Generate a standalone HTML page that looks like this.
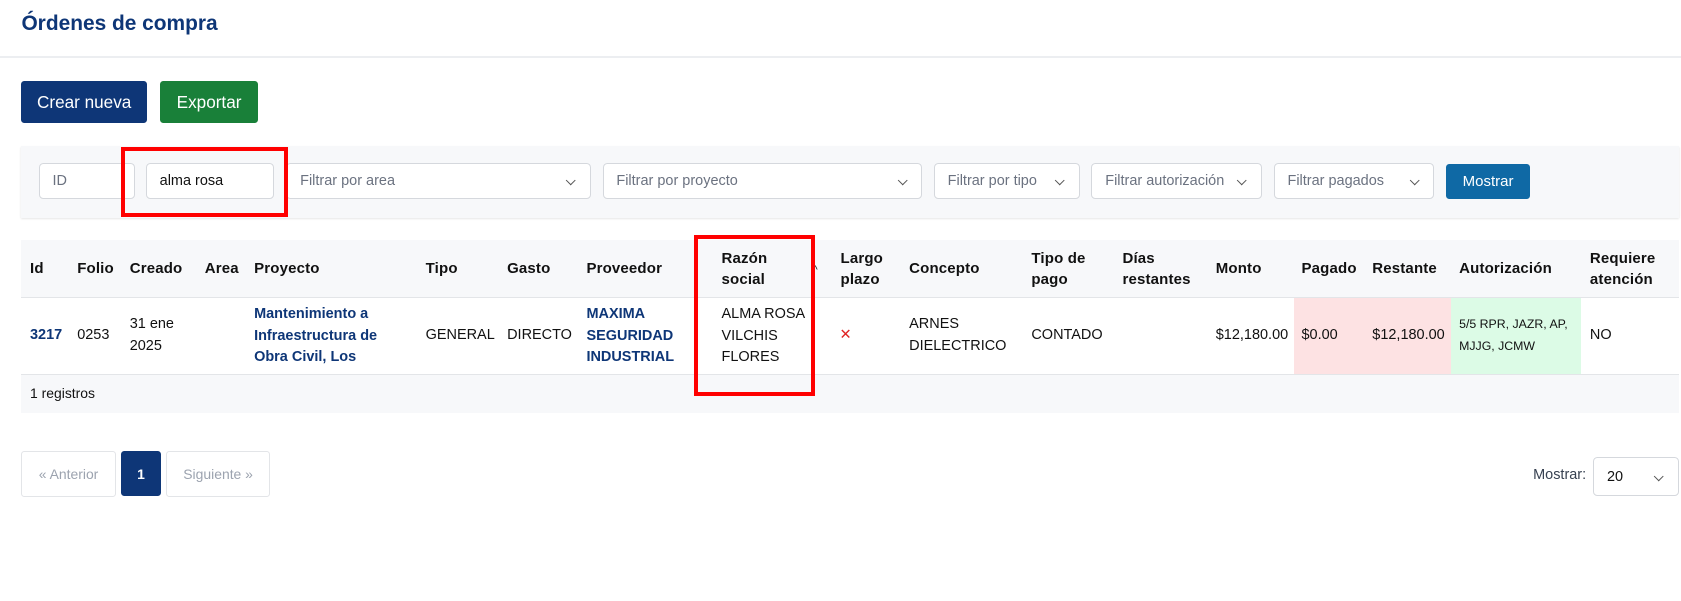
<!DOCTYPE html>
<html><head><meta charset="utf-8"><style>
html,body{margin:0;padding:0;background:#fff;overflow:hidden}
body{width:1568px;height:561px;zoom:1.0721;position:relative;font-family:"Liberation Sans",Arial,sans-serif;color:#111;font-size:14px}
.a{position:absolute}
.btn{position:absolute;color:#fff;border-radius:3px;display:flex;align-items:center;justify-content:center}
.inp{position:absolute;top:152px;height:34px;box-sizing:border-box;border:1px solid #d5d8dd;border-radius:4px;background:#fff;display:flex;align-items:center;padding-left:12px;color:#6b7280;font-size:13.5px}
.chev{position:absolute;right:14px;top:12px;width:6px;height:6px;border-right:1px solid #555;border-bottom:1px solid #555;transform:rotate(45deg)}
.th{position:absolute;font-weight:bold;font-size:14px;line-height:20px;letter-spacing:.15px}
.td{position:absolute;font-size:13.5px;line-height:20px}
.lnk{color:#0e3677;font-weight:bold}
</style></head><body>
<div class="a" style="left:20px;top:11px;font-size:19.5px;font-weight:bold;color:#0e3677">Órdenes de compra</div>
<div class="a" style="left:0;top:52px;width:1568px;height:2px;background:#eceef1"></div>
<div class="btn" style="left:20px;top:76px;width:117px;height:39px;background:#0e3677;font-size:16px">Crear nueva</div>
<div class="btn" style="left:149px;top:76px;width:92px;height:39px;background:#198039;font-size:16px">Exportar</div>

<div class="a" style="left:20px;top:136px;width:1546px;height:67px;background:#f7f8fa;box-shadow:0 1px 2px rgba(0,0,0,.12)"></div>
<div class="inp" style="left:36px;width:90px">ID</div>
<div class="inp" style="left:136px;width:120px;color:#111">alma rosa</div>
<div class="inp" style="left:267px;width:284px">Filtrar por area<span class="chev"></span></div>
<div class="inp" style="left:562px;width:298px">Filtrar por proyecto<span class="chev"></span></div>
<div class="inp" style="left:871px;width:136px">Filtrar por tipo<span class="chev"></span></div>
<div class="inp" style="left:1018px;width:159px">Filtrar autorización<span class="chev"></span></div>
<div class="inp" style="left:1188px;width:150px">Filtrar pagados<span class="chev"></span></div>
<div class="btn" style="left:1349px;top:153px;width:78px;height:33px;background:#0f69a5;font-size:14px">Mostrar</div>

<div class="a" style="left:20px;top:224px;width:1546px;height:53px;background:#f7f8fa;border-bottom:1px solid #e3e5e8"></div>
<div class="a" style="left:20px;top:349px;width:1546px;height:35px;background:#f7f8fa;border-top:1px solid #e3e5e8"></div>
<div class="a" style="left:1207px;top:278px;width:146px;height:71px;background:#fde2e3"></div>
<div class="a" style="left:1353px;top:278px;width:122px;height:71px;background:#dcfbe6"></div>

<div class="th" style="left:28px;top:241px">Id</div>
<div class="th" style="left:72px;top:241px">Folio</div>
<div class="th" style="left:121px;top:241px">Creado</div>
<div class="th" style="left:191px;top:241px">Area</div>
<div class="th" style="left:237px;top:241px">Proyecto</div>
<div class="th" style="left:397px;top:241px">Tipo</div>
<div class="th" style="left:473px;top:241px">Gasto</div>
<div class="th" style="left:547px;top:241px">Proveedor</div>
<div class="th" style="left:673px;top:231px">Razón<br>social</div>
<div class="a" style="left:758px;top:246px;font-size:10px">^</div>
<div class="th" style="left:784px;top:231px">Largo<br>plazo</div>
<div class="th" style="left:848px;top:241px">Concepto</div>
<div class="th" style="left:962px;top:231px">Tipo de<br>pago</div>
<div class="th" style="left:1047px;top:231px">Días<br>restantes</div>
<div class="th" style="left:1134px;top:241px">Monto</div>
<div class="th" style="left:1214px;top:241px">Pagado</div>
<div class="th" style="left:1280px;top:241px">Restante</div>
<div class="th" style="left:1361px;top:241px">Autorización</div>
<div class="th" style="left:1483px;top:231px">Requiere<br>atención</div>

<div class="td lnk" style="left:28px;top:303px">3217</div>
<div class="td" style="left:72px;top:303px">0253</div>
<div class="td" style="left:121px;top:293px">31 ene<br>2025</div>
<div class="td lnk" style="left:237px;top:284px">Mantenimiento a<br>Infraestructura de<br>Obra Civil, Los</div>
<div class="td" style="left:397px;top:303px">GENERAL</div>
<div class="td" style="left:473px;top:303px">DIRECTO</div>
<div class="td lnk" style="left:547px;top:284px">MAXIMA<br>SEGURIDAD<br>INDUSTRIAL</div>
<div class="td" style="left:673px;top:284px">ALMA ROSA<br>VILCHIS<br>FLORES</div>
<div class="td" style="left:783px;top:303px;color:#e02424">✕</div>
<div class="td" style="left:848px;top:293px">ARNES<br>DIELECTRICO</div>
<div class="td" style="left:962px;top:303px">CONTADO</div>
<div class="td" style="left:1134px;top:303px">$12,180.00</div>
<div class="td" style="left:1214px;top:303px">$0.00</div>
<div class="td" style="left:1280px;top:303px">$12,180.00</div>
<div class="td" style="left:1361px;top:293px;font-size:11.5px">5/5 RPR, JAZR, AP,<br>MJJG, JCMW</div>
<div class="td" style="left:1483px;top:303px">NO</div>
<div class="td" style="left:28px;top:357px;font-size:13px">1 registros</div>

<div class="a" style="left:113px;top:137px;width:148px;height:58px;border:4px solid #f00"></div>
<div class="a" style="left:647px;top:219px;width:106px;height:143px;border:4px solid #f00"></div>

<div class="btn" style="left:20px;top:421px;width:86px;height:41px;border:1px solid #e3e5e8;color:#9ca3af;font-size:13px">« Anterior</div>
<div class="btn" style="left:113px;top:421px;width:37px;height:42px;background:#0e3677;font-size:13px;font-weight:bold">1</div>
<div class="btn" style="left:155px;top:421px;width:95px;height:41px;border:1px solid #e3e5e8;color:#9ca3af;font-size:13px">Siguiente »</div>
<div class="a" style="left:1430px;top:436px;color:#374151;font-size:13.5px">Mostrar:</div>
<div class="inp" style="left:1486px;top:426px;width:80px;height:37px;color:#111">20<span class="chev" style="top:14px"></span></div>
</body></html>
